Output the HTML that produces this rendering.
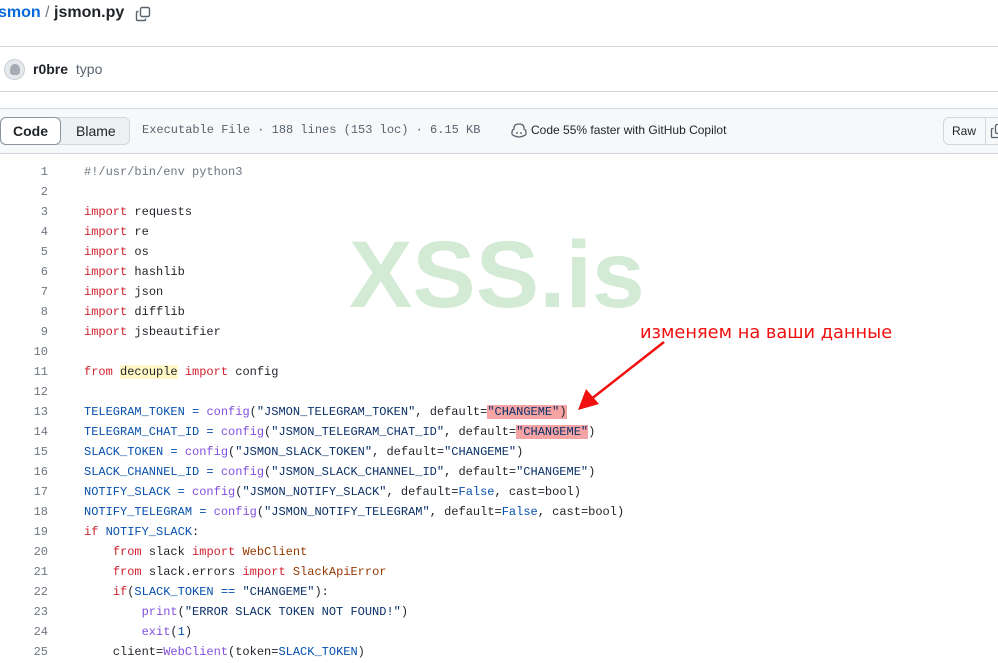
<!DOCTYPE html>
<html><head><meta charset="utf-8"><style>
*{margin:0;padding:0;box-sizing:border-box}
body{width:998px;height:663px;overflow:hidden;background:#fff;font-family:"Liberation Sans",sans-serif;color:#1f2328;position:relative}
.abs{position:absolute}
.hl{position:absolute;left:0;right:0;height:1px;background:#d0d7de}
.code{position:absolute;left:0;top:161px;width:998px;font-family:"Liberation Mono",monospace;font-size:12px}
.ln{position:absolute;height:20px;line-height:20px;white-space:pre}
.n{position:absolute;left:0;width:48px;text-align:right;color:#6e7781}
.t{position:absolute;left:84px;color:#1f2328}
.k{color:#cf222e}.v{color:#0550ae}.f{color:#8250df}.s{color:#0a3069}.c{color:#953800}.m{color:#6e7781}
.mark{background:#f5a3a3}
</style></head><body>
<div class="abs" style="left:-2px;top:4px;font-size:16px;font-weight:bold;"><span style="color:#0969da">smon</span><span style="color:#6e7781;font-weight:normal"> / </span>jsmon.py</div>
<svg class="abs" style="left:135px;top:6px" width="16" height="16" viewBox="0 0 16 16" fill="none" stroke="#59636e" stroke-width="1.4"><rect x="5.5" y="1.5" width="9" height="9" rx="1.5"/><path d="M3.5 5.5h-1a1 1 0 0 0-1 1v7a1 1 0 0 0 1 1h7a1 1 0 0 0 1-1v-1"/></svg>
<div class="hl" style="top:46px"></div>
<div class="abs" style="left:4px;top:59px;width:21px;height:21px;border-radius:50%;background:#e6e9ec;border:1px solid #c9ced3"><div style="position:absolute;left:5px;top:4px;width:10px;height:11px;border-radius:50% 50% 30% 30%;background:#a5acb3"></div></div>
<div class="abs" style="left:33px;top:61px;font-size:14px"><b>r0bre</b> <span style="color:#59636e;margin-left:4px">typo</span></div>
<div class="hl" style="top:91px"></div>
<div class="abs" style="left:0;top:108px;width:998px;height:46px;background:#f6f8fa;border-top:1px solid #d0d7de;border-bottom:1px solid #d0d7de"></div>
<div class="abs" style="left:0;top:117px;width:130px;height:28px;background:#eef1f4;border:1px solid #d0d7de;border-radius:6px"></div>
<div class="abs" style="left:0;top:117px;width:61px;height:28px;background:#fff;border:1px solid #8c959f;border-radius:6px;font-size:14px;font-weight:bold;text-align:center;line-height:26px">Code</div>
<div class="abs" style="left:76px;top:117px;font-size:14px;line-height:28px">Blame</div>
<div class="abs" style="left:142px;top:123px;font-family:'Liberation Mono',monospace;font-size:12px;color:#59636e">Executable File · 188 lines (153 loc) · 6.15 KB</div>
<svg class="abs" style="left:511px;top:123px" width="16" height="15" viewBox="0 0 16 15" fill="none" stroke="#59636e" stroke-width="1.3"><path d="M3 5c0-3 2-4 5-4s5 1 5 4v1c1 .5 2 1.5 2 3v2c0 1-4 3-7 3s-7-2-7-3V9c0-1.5 1-2.5 2-3z"/><path d="M6 9v2M10 9v2"/></svg>
<div class="abs" style="left:531px;top:123px;font-size:12px">Code 55% faster with GitHub Copilot</div>
<div class="abs" style="left:943px;top:117px;width:70px;height:28px;background:#f6f8fa;border:1px solid #d0d7de;border-radius:6px"></div>
<div class="abs" style="left:985px;top:117px;width:1px;height:28px;background:#d0d7de"></div>
<div class="abs" style="left:952px;top:124px;font-size:12px">Raw</div>
<svg class="abs" style="left:990px;top:123px" width="16" height="16" viewBox="0 0 16 16" fill="none" stroke="#59636e" stroke-width="1.3"><rect x="5.5" y="1.5" width="9" height="9" rx="1.5"/><path d="M3.5 5.5h-1a1 1 0 0 0-1 1v7a1 1 0 0 0 1 1h7a1 1 0 0 0 1-1v-1"/></svg>
<div class="abs" style="left:349px;top:221px;font-size:95px;font-weight:bold;color:#d3ead5">XSS.is</div>
<div class="code" style="top:162px">
<div class="ln" style="top:0"><span class="n">1</span><span class="t m">#!/usr/bin/env python3</span></div>
<div class="ln" style="top:20px"><span class="n">2</span></div>
<div class="ln" style="top:40px"><span class="n">3</span><span class="t"><span class="k">import</span> requests</span></div>
<div class="ln" style="top:60px"><span class="n">4</span><span class="t"><span class="k">import</span> re</span></div>
<div class="ln" style="top:80px"><span class="n">5</span><span class="t"><span class="k">import</span> os</span></div>
<div class="ln" style="top:100px"><span class="n">6</span><span class="t"><span class="k">import</span> hashlib</span></div>
<div class="ln" style="top:120px"><span class="n">7</span><span class="t"><span class="k">import</span> json</span></div>
<div class="ln" style="top:140px"><span class="n">8</span><span class="t"><span class="k">import</span> difflib</span></div>
<div class="ln" style="top:160px"><span class="n">9</span><span class="t"><span class="k">import</span> jsbeautifier</span></div>
<div class="ln" style="top:180px"><span class="n">10</span></div>
<div class="ln" style="top:200px"><span class="n">11</span><span class="t"><span class="k">from</span> <span style="background:#fff8c5">decouple</span> <span class="k">import</span> config</span></div>
<div class="ln" style="top:220px"><span class="n">12</span></div>
<div class="ln" style="top:240px"><span class="n">13</span><span class="t"><span class="v">TELEGRAM_TOKEN</span> <span class="v">=</span> <span class="f">config</span>(<span class="s">"JSMON_TELEGRAM_TOKEN"</span>, default=<span class="mark"><span class="s">"CHANGEME"</span>)</span></span></div>
<div class="ln" style="top:260px"><span class="n">14</span><span class="t"><span class="v">TELEGRAM_CHAT_ID</span> <span class="v">=</span> <span class="f">config</span>(<span class="s">"JSMON_TELEGRAM_CHAT_ID"</span>, default=<span class="mark s">"CHANGEME"</span>)</span></div>
<div class="ln" style="top:280px"><span class="n">15</span><span class="t"><span class="v">SLACK_TOKEN</span> <span class="v">=</span> <span class="f">config</span>(<span class="s">"JSMON_SLACK_TOKEN"</span>, default=<span class="s">"CHANGEME"</span>)</span></div>
<div class="ln" style="top:300px"><span class="n">16</span><span class="t"><span class="v">SLACK_CHANNEL_ID</span> <span class="v">=</span> <span class="f">config</span>(<span class="s">"JSMON_SLACK_CHANNEL_ID"</span>, default=<span class="s">"CHANGEME"</span>)</span></div>
<div class="ln" style="top:320px"><span class="n">17</span><span class="t"><span class="v">NOTIFY_SLACK</span> <span class="v">=</span> <span class="f">config</span>(<span class="s">"JSMON_NOTIFY_SLACK"</span>, default=<span class="v">False</span>, cast=bool)</span></div>
<div class="ln" style="top:340px"><span class="n">18</span><span class="t"><span class="v">NOTIFY_TELEGRAM</span> <span class="v">=</span> <span class="f">config</span>(<span class="s">"JSMON_NOTIFY_TELEGRAM"</span>, default=<span class="v">False</span>, cast=bool)</span></div>
<div class="ln" style="top:360px"><span class="n">19</span><span class="t"><span class="k">if</span> <span class="v">NOTIFY_SLACK</span>:</span></div>
<div class="ln" style="top:380px"><span class="n">20</span><span class="t">    <span class="k">from</span> slack <span class="k">import</span> <span class="c">WebClient</span></span></div>
<div class="ln" style="top:400px"><span class="n">21</span><span class="t">    <span class="k">from</span> slack.errors <span class="k">import</span> <span class="c">SlackApiError</span></span></div>
<div class="ln" style="top:420px"><span class="n">22</span><span class="t">    <span class="k">if</span>(<span class="v">SLACK_TOKEN</span> <span class="v">==</span> <span class="s">"CHANGEME"</span>):</span></div>
<div class="ln" style="top:440px"><span class="n">23</span><span class="t">        <span class="f">print</span>(<span class="s">"ERROR SLACK TOKEN NOT FOUND!"</span>)</span></div>
<div class="ln" style="top:460px"><span class="n">24</span><span class="t">        <span class="f">exit</span>(<span class="v">1</span>)</span></div>
<div class="ln" style="top:480px"><span class="n">25</span><span class="t">    client=<span class="f">WebClient</span>(token=<span class="v">SLACK_TOKEN</span>)</span></div>
</div>
<div class="abs" style="left:640px;top:322px;font-family:'DejaVu Sans',sans-serif;font-size:17.8px;color:#f01010">изменяем на ваши данные</div>
<svg class="abs" style="left:0;top:0" width="998" height="663"><line x1="664" y1="342" x2="590" y2="400" stroke="#f01010" stroke-width="2.5"/><polygon points="578,410 586,389 599,404" fill="#f01010"/></svg>
</body></html>
